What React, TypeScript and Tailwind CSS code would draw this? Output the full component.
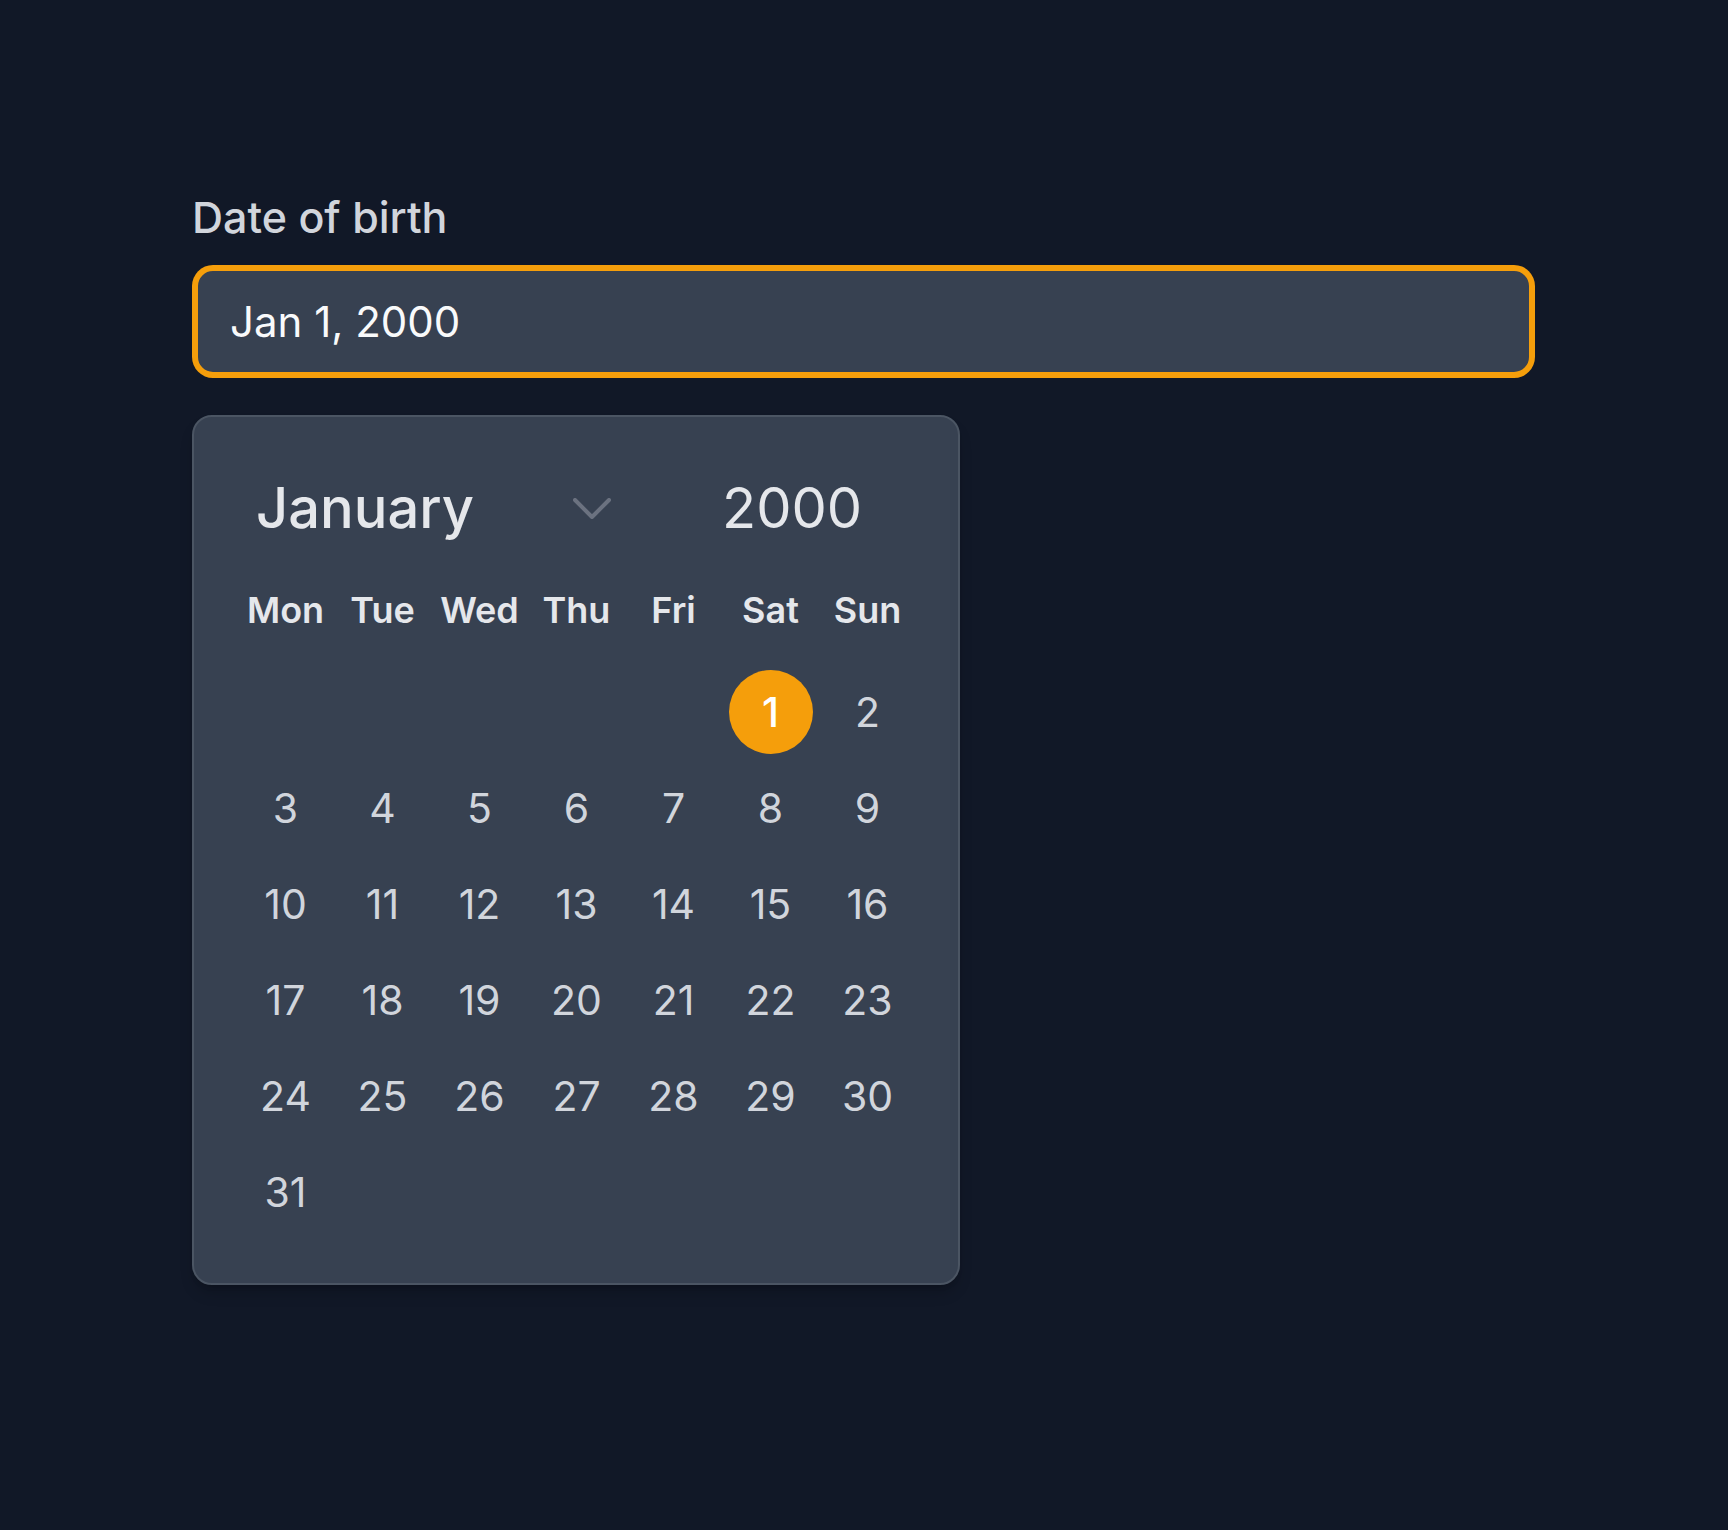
import React from 'react';

const WEEKDAYS = ['Mon', 'Tue', 'Wed', 'Thu', 'Fri', 'Sat', 'Sun'];

// January 2000 starts on a Saturday
const buildDays = () => {
    const cells: (number | null)[] = [null, null, null, null, null];
    for (let d = 1; d <= 31; d++) cells.push(d);
    while (cells.length % 7 !== 0) cells.push(null);
    return cells;
};

const ChevronDown: React.FC = () => (
    <svg width="38" height="21" viewBox="0 0 38 21" fill="none">
        <polyline points="2,2 19,19 36,2" stroke="#6b7280" strokeWidth="4" strokeLinecap="round" strokeLinejoin="round" />
    </svg>
);

const App: React.FC = () => {
    const selected = 1;
    const days = buildDays();

    return (
        <div className="min-h-screen w-full bg-[#111827] font-['Inter',sans-serif]">
            <div className="pl-[192px] pt-[196px]">
                {/* Label */}
                <label className="block text-[43px] leading-[43px] font-medium text-gray-300">Date of birth</label>

                {/* Input */}
                <div className="mt-[29px] ml-[3px] w-[1337px] h-[107px] rounded-[18px] border-[3px] border-[#f59e0b] ring-[3px] ring-[#f59e0b] bg-[#374151] flex items-center pl-[32px]">
                    <span className="text-[42px] leading-none text-gray-50">Jan 1, 2000</span>
                </div>

                {/* Calendar */}
                <div className="mt-[40px] w-[768px] rounded-[20px] border-2 border-[#4b5563] bg-[#374151] shadow-lg shadow-black/20 px-[43px] pt-[43px] pb-[43px]">
                    <div className="h-[96px] flex items-center pl-[19px]">
                        <div className="w-[355px] flex items-center justify-between">
                            <span className="text-[56px] leading-none font-medium text-gray-200">January</span>
                            <ChevronDown />
                        </div>
                        <span className="ml-[111px] text-[56px] leading-none text-gray-200">2000</span>
                    </div>

                    <div className="mt-[6px] grid grid-cols-[repeat(7,97px)] h-[96px]">
                        {WEEKDAYS.map((w) => (
                            <div key={w} className="flex items-center justify-center text-[36px] leading-none font-semibold text-gray-200">
                                {w}
                            </div>
                        ))}
                    </div>

                    <div className="mt-[6px] grid grid-cols-[repeat(7,97px)] auto-rows-[96px]">
                        {days.map((d, i) => (
                            <div key={i} className="flex items-center justify-center">
                                {d === null ? null : d === selected ? (
                                    <span className="w-[84px] h-[84px] rounded-full bg-[#f59e0b] flex items-center justify-center text-[41px] leading-none font-medium text-white">
                                        {d}
                                    </span>
                                ) : (
                                    <span className="text-[41px] leading-none text-gray-300">{d}</span>
                                )}
                            </div>
                        ))}
                    </div>
                </div>
            </div>
        </div>
    );
};

export default App;
